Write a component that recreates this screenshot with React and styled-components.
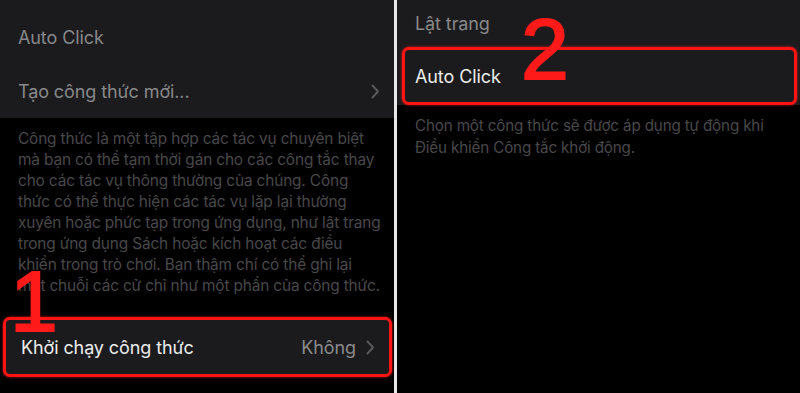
import styled, { createGlobalStyle } from 'styled-components'

const GlobalStyle = createGlobalStyle`
    html, body {
        margin: 0;
        padding: 0;
        background: #000;
    }
    body {
        font-family: Inter, "Noto Sans", "Liberation Sans", sans-serif;
        -webkit-font-smoothing: antialiased;
    }
`

const Screen = styled.main`
    display: flex;
    width: 800px;
    height: 393px;
    overflow: hidden;
    background: #000;
`

const Panel = styled.section`
    position: relative;
    width: ${(props) => props.width}px;
    flex-shrink: 0;
    display: flex;
    flex-direction: column;
    background: #000;
`

const Divider = styled.div`
    width: 3px;
    flex-shrink: 0;
    background: #e8e8e8;
`

const Group = styled.div`
    display: flex;
    flex-direction: column;
    background: #1b1b1d;
    padding-top: ${(props) => props.padTop || 0}px;
`

const Row = styled.div`
    display: flex;
    align-items: center;
    justify-content: space-between;
    height: ${(props) => props.height || 56}px;
    padding: 0 14px 0 18px;
    box-sizing: border-box;
    font-size: 18px;
    letter-spacing: -0.1px;
    color: ${(props) => (props.bright ? '#ececec' : '#88888a')};
    background: #1b1b1d;
    ${(props) =>
        props.marked &&
        `
        margin: ${props.margin || '0'};
        border: 3px solid #ff1414;
        border-radius: 7px;
        box-shadow: 0 0 3px rgba(255, 30, 30, 0.8);
        padding-left: ${props.padLeft || 15}px;
    `}
`

const Value = styled.span`
    display: flex;
    align-items: center;
    gap: 10px;
    color: #8a8a8c;
`

const Chevron = () => (
    <svg width="9" height="15" viewBox="0 0 9 15" fill="none">
        <path
            d="M1.5 1.5 L7 7.5 L1.5 13.5"
            stroke="#58585c"
            strokeWidth="2"
            strokeLinecap="round"
            strokeLinejoin="round"
        />
    </svg>
)

const Footnote = styled.p`
    margin: ${(props) => props.margin || '0'};
    padding: 0 0 0 18px;
    font-size: ${(props) => props.size || 16}px;
    line-height: ${(props) => props.lh || 21}px;
    color: #48484a;
    letter-spacing: -0.15px;

    span {
        display: block;
        white-space: nowrap;
    }
`

const Step = styled.div`
    position: absolute;
    left: ${(props) => props.x}px;
    top: ${(props) => props.y}px;
    font-family: "Liberation Sans", Arial, sans-serif;
    font-weight: normal;
    font-size: ${(props) => props.size || 84}px;
    line-height: 1;
    color: #ff1a1a;
    -webkit-text-stroke: 2px #ff1a1a;
    z-index: 2;
`

const leftText = [
    'Công thức là một tập hợp các tác vụ chuyên biệt',
    'mà bạn có thể tạm thời gán cho các công tắc thay',
    'cho các tác vụ thông thường của chúng. Công',
    'thức có thể thực hiện các tác vụ lặp lại thường',
    'xuyên hoặc phức tạp trong ứng dụng, như lật trang',
    'trong ứng dụng Sách hoặc kích hoạt các điều',
    'khiển trong trò chơi. Bạn thậm chí có thể ghi lại',
    'một chuỗi các cử chỉ như một phần của công thức.',
]

const rightText = [
    'Chọn một công thức sẽ được áp dụng tự động khi',
    'Điều khiển Công tắc khởi động.',
]

export default function App() {
    return (
        <>
            <GlobalStyle />
            <Screen>
                <Panel width={394}>
                    <Group padTop={9}>
                        <Row height={56}>Auto Click</Row>
                        <Row height={53}>
                            Tạo công thức mới...
                            <Chevron />
                        </Row>
                    </Group>
                    <Footnote margin="10px 0 0 0" size={15.4}>
                        {leftText.map((line) => (
                            <span key={line}>{line}</span>
                        ))}
                    </Footnote>
                    <Row bright marked margin="21px 2px 0 3px" height={60}>
                        Khởi chạy công thức
                        <Value>
                            Không
                            <Chevron />
                        </Value>
                    </Row>
                    <Step x={10} y={258} size={86}>1</Step>
                </Panel>
                <Divider />
                <Panel width={403}>
                    <Group>
                        <Row height={47}>Lật trang</Row>
                        <Row bright marked margin="0 3px 0 5px" height={58} padLeft={10}>
                            Auto Click
                        </Row>
                    </Group>
                    <Footnote margin="10px 0 0 0" size={15.2} lh={22}>
                        {rightText.map((line) => (
                            <span key={line}>{line}</span>
                        ))}
                    </Footnote>
                    <Step x={124} y={6} size={86}>2</Step>
                </Panel>
            </Screen>
        </>
    )
}
